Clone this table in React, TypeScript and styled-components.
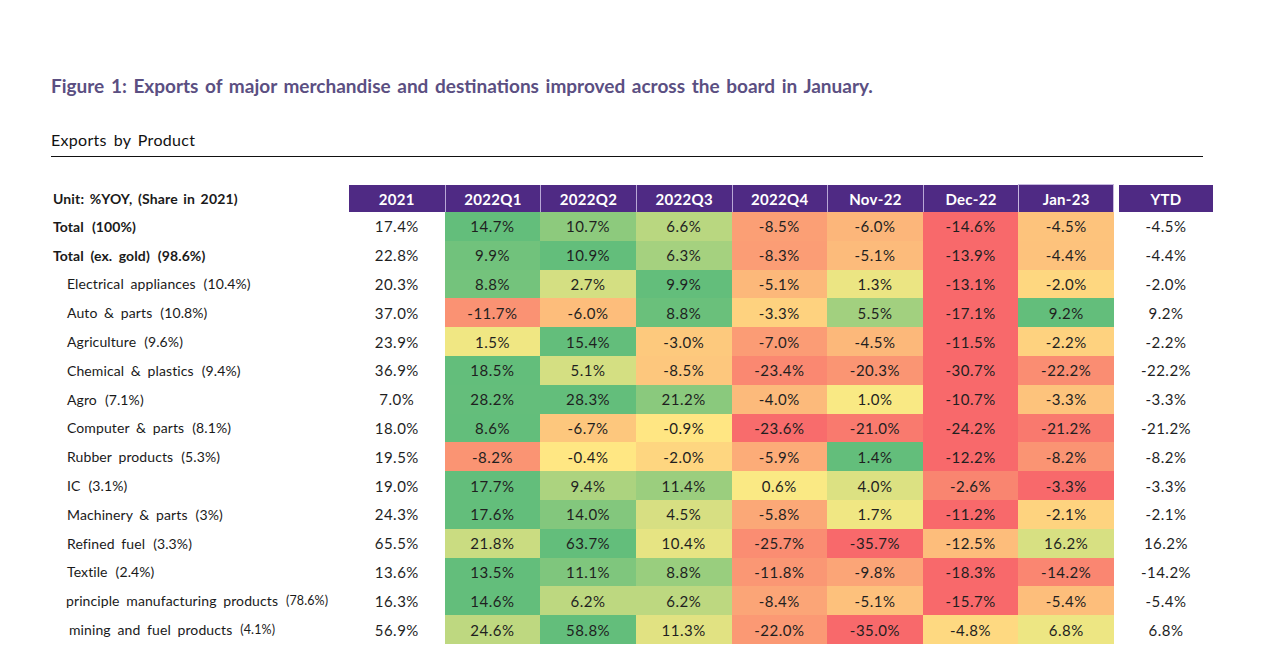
import React from "react";
import styled, { createGlobalStyle } from "styled-components";

const GlobalStyle = createGlobalStyle`
  html, body { margin: 0; padding: 0; background: #ffffff; }
  body { font-family: Lato, "Open Sans", sans-serif; color: #1a1a1a; }
`;

const Page = styled.div`
  width: 1278px;
  height: 649px;
  overflow: hidden;
  padding: 74px 0 0 51px;
  box-sizing: border-box;
`;

const Title = styled.h1`
  margin: 0;
  font-size: 19px;
  line-height: 24px;
  font-weight: 700;
  color: #5b4f82;
  word-spacing: 2px;
`;

const SectionHeading = styled.h2`
  margin: 32px 0 0 0;
  width: 1152px;
  font-size: 16px;
  line-height: 20px;
  font-weight: 400;
  color: #111;
  padding-bottom: 6px;
  border-bottom: 1.3px solid #111;
  word-spacing: 2.5px;
  letter-spacing: 0.3px;
`;

const Table = styled.div`
  margin-top: 28px;
  display: grid;
  grid-template-columns: 298px repeat(8, 1fr) 99px;
  width: 1162px;
  grid-auto-rows: 28.8px;
  grid-template-rows: 27px;
`;

const UnitLabel = styled.div`
  display: flex;
  align-items: center;
  padding-left: 2px;
  font-size: 14px;
  font-weight: 700;
  color: #1a1a1a;
  word-spacing: 2px;
  letter-spacing: 0.15px;
`;

const HeadCell = styled.div<{ $first?: boolean; $active?: boolean; $gap?: boolean }>`
  display: flex;
  align-items: center;
  justify-content: center;
  background: #4f2a84;
  color: #ffffff;
  font-size: 15px;
  font-weight: 700;
  letter-spacing: 0.3px;
  border-left: ${(p) => (p.$first ? "none" : "1px solid #b9a8d6")};
  margin-left: ${(p) => (p.$gap ? "5px" : "0")};
  ${(p) =>
    p.$active &&
    `
    margin-top: -1px;
    border: 1px solid #c6b8de;
    border-bottom: none;
  `}
`;

const Label = styled.div<{ $indent: number; $bold?: boolean }>`
  display: flex;
  align-items: center;
  padding-left: ${(p) => p.$indent}px;
  font-size: 14px;
  font-weight: ${(p) => (p.$bold ? 700 : 400)};
  color: #1a1a1a;
  word-spacing: 3px;
  letter-spacing: 0.1px;
  white-space: nowrap;
`;

const Share = styled.span<{ $small?: boolean }>`
  font-size: ${(p) => (p.$small ? "12.5px" : "14px")};
  margin-left: 8px;
`;

const Cell = styled.div<{ $bg: string; $gap?: boolean }>`
  display: flex;
  align-items: center;
  justify-content: center;
  background: ${(p) => p.$bg};
  margin-left: ${(p) => (p.$gap ? "5px" : "0")};
  font-size: 15px;
  letter-spacing: 0.5px;
  color: #1f1f1f;
`;

type Row = {
  name: string;
  share: string;
  indent: number;
  bold?: boolean;
  smallShare?: boolean;
  y2021: number;
  vals: number[];
  ytd: number;
};

const rows: Row[] = [
  { name: "Total", share: "(100%)", indent: 2, bold: true, y2021: 17.4, vals: [14.7, 10.7, 6.6, -8.5, -6.0, -14.6, -4.5], ytd: -4.5 },
  { name: "Total (ex. gold)", share: "(98.6%)", indent: 2, bold: true, y2021: 22.8, vals: [9.9, 10.9, 6.3, -8.3, -5.1, -13.9, -4.4], ytd: -4.4 },
  { name: "Electrical appliances", share: "(10.4%)", indent: 16, y2021: 20.3, vals: [8.8, 2.7, 9.9, -5.1, 1.3, -13.1, -2.0], ytd: -2.0 },
  { name: "Auto & parts", share: "(10.8%)", indent: 16, y2021: 37.0, vals: [-11.7, -6.0, 8.8, -3.3, 5.5, -17.1, 9.2], ytd: 9.2 },
  { name: "Agriculture", share: "(9.6%)", indent: 16, y2021: 23.9, vals: [1.5, 15.4, -3.0, -7.0, -4.5, -11.5, -2.2], ytd: -2.2 },
  { name: "Chemical & plastics", share: "(9.4%)", indent: 16, y2021: 36.9, vals: [18.5, 5.1, -8.5, -23.4, -20.3, -30.7, -22.2], ytd: -22.2 },
  { name: "Agro", share: "(7.1%)", indent: 16, y2021: 7.0, vals: [28.2, 28.3, 21.2, -4.0, 1.0, -10.7, -3.3], ytd: -3.3 },
  { name: "Computer & parts", share: "(8.1%)", indent: 16, y2021: 18.0, vals: [8.6, -6.7, -0.9, -23.6, -21.0, -24.2, -21.2], ytd: -21.2 },
  { name: "Rubber products", share: "(5.3%)", indent: 16, y2021: 19.5, vals: [-8.2, -0.4, -2.0, -5.9, 1.4, -12.2, -8.2], ytd: -8.2 },
  { name: "IC", share: "(3.1%)", indent: 16, y2021: 19.0, vals: [17.7, 9.4, 11.4, 0.6, 4.0, -2.6, -3.3], ytd: -3.3 },
  { name: "Machinery & parts", share: "(3%)", indent: 16, y2021: 24.3, vals: [17.6, 14.0, 4.5, -5.8, 1.7, -11.2, -2.1], ytd: -2.1 },
  { name: "Refined fuel", share: "(3.3%)", indent: 16, y2021: 65.5, vals: [21.8, 63.7, 10.4, -25.7, -35.7, -12.5, 16.2], ytd: 16.2 },
  { name: "Textile", share: "(2.4%)", indent: 16, y2021: 13.6, vals: [13.5, 11.1, 8.8, -11.8, -9.8, -18.3, -14.2], ytd: -14.2 },
  { name: "principle manufacturing products", share: "(78.6%)", indent: 15, smallShare: true, y2021: 16.3, vals: [14.6, 6.2, 6.2, -8.4, -5.1, -15.7, -5.4], ytd: -5.4 },
  { name: "mining and fuel products", share: "(4.1%)", indent: 18, smallShare: true, y2021: 56.9, vals: [24.6, 58.8, 11.3, -22.0, -35.0, -4.8, 6.8], ytd: 6.8 },
];

const headers = ["2021", "2022Q1", "2022Q2", "2022Q3", "2022Q4", "Nov-22", "Dec-22", "Jan-23"];

const RED = [248, 105, 107];
const YEL = [255, 235, 132];
const GRN = [99, 190, 123];

const lerp = (a: number[], b: number[], t: number) =>
  `rgb(${a.map((v, i) => Math.round(v + (b[i] - v) * t)).join(",")})`;

const colorFor = (v: number, min: number, max: number) => {
  if (v >= 0) return lerp(YEL, GRN, max > 0 ? v / max : 0);
  return lerp(YEL, RED, min < 0 ? v / min : 0);
};

const fmt = (v: number) => `${v.toFixed(1)}%`;

export default function App() {
  return (
    <>
      <GlobalStyle />
      <Page>
        <Title>Figure 1: Exports of major merchandise and destinations improved across the board in January.</Title>
        <SectionHeading>Exports by Product</SectionHeading>
        <Table>
          <UnitLabel>Unit: %YOY, (Share in 2021)</UnitLabel>
          {headers.map((h, i) => (
            <HeadCell key={h} $first={i === 0} $active={h === "Jan-23"}>
              {h}
            </HeadCell>
          ))}
          <HeadCell $first $gap>
            YTD
          </HeadCell>
          {rows.map((r) => {
            const min = Math.min(...r.vals);
            const max = Math.max(...r.vals);
            return (
              <React.Fragment key={r.name}>
                <Label $indent={r.indent} $bold={r.bold}>
                  {r.name}
                  <Share $small={r.smallShare}>{r.share}</Share>
                </Label>
                <Cell $bg="#ffffff">{fmt(r.y2021)}</Cell>
                {r.vals.map((v, i) => (
                  <Cell key={i} $bg={colorFor(v, min, max)}>
                    {fmt(v)}
                  </Cell>
                ))}
                <Cell $bg="#ffffff" $gap>
                  {fmt(r.ytd)}
                </Cell>
              </React.Fragment>
            );
          })}
        </Table>
      </Page>
    </>
  );
}
